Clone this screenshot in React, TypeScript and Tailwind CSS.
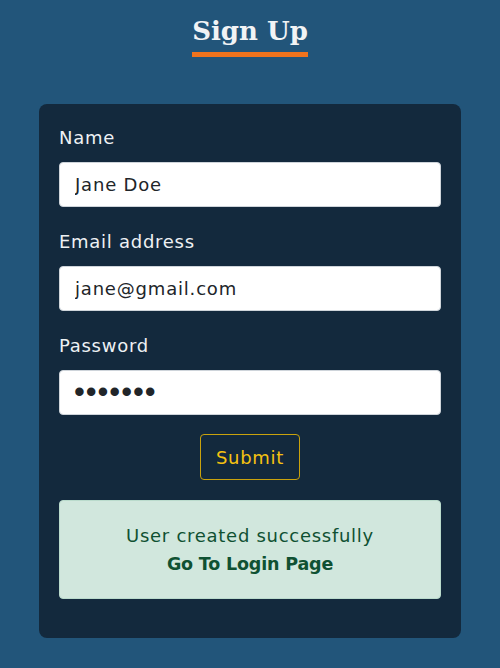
const fields = [
  { label: 'Name', type: 'text', value: 'Jane Doe' },
  { label: 'Email address', type: 'email', value: 'jane@gmail.com' },
  { label: 'Password', type: 'password', value: 'secret1' },
]

export default function App() {
  return (
    <div className="min-h-[668px] bg-[#22557a] pt-[12px] pb-[31px] font-['DejaVu_Sans',sans-serif] tracking-[0.045em]">
      <div className="flex justify-center">
        <h1 className="border-b-[5px] border-[#f0731d] pb-[1px] font-['DejaVu_Serif',serif] text-[26px] font-bold leading-[39px] tracking-normal text-[#f1f3f5]">
          Sign Up
        </h1>
      </div>

      <div className="mx-[39px] mt-[47px] rounded-[8px] bg-[#13293d] px-[20px] pt-[21px] pb-[39px]">
        <form className="flex flex-col" onSubmit={(e) => e.preventDefault()}>
          {fields.map((field) => (
            <div key={field.label} className="mb-[22px]">
              <label className="mb-[11px] block text-[18px] leading-[26px] text-[#eef1f4]">
                {field.label}
              </label>
              <input
                type={field.type}
                defaultValue={field.value}
                className={
                  field.type === 'password'
                    ? "h-[45px] w-full rounded-[4px] border border-[#ced4da] bg-white px-[14px] font-['Liberation_Sans',sans-serif] text-[31px] tracking-[0.03em] text-[#212529] outline-none"
                    : 'h-[45px] w-full rounded-[4px] border border-[#ced4da] bg-white px-[15px] text-[18px] tracking-[0.045em] text-[#212529] outline-none'
                }
              />
            </div>
          ))}

          <div className="-mt-[3px] flex justify-center">
            <button
              type="submit"
              className="h-[46px] w-[100px] rounded-[4px] border border-[#c9a20d] text-[18px] text-[#f5c211]"
            >
              Submit
            </button>
          </div>
        </form>

        <div className="mt-[20px] flex h-[99px] flex-col items-center justify-center rounded-[4px] border border-[#badbcc] bg-[#d1e7dd] text-[18px] leading-[29px] text-[#0f5132]">
          <p>User created successfully</p>
          <a href="#" className="text-[17.5px] font-bold tracking-[-0.01em]">
            Go To Login Page
          </a>
        </div>
      </div>
    </div>
  )
}
